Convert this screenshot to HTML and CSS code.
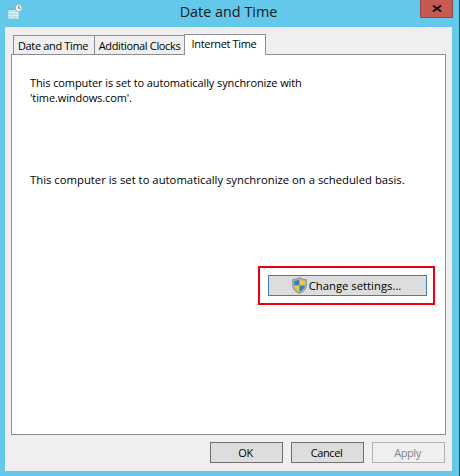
FILE: index.html

```html
<!DOCTYPE html>
<html lang="en">
<head>
    <meta charset="UTF-8">
    <title>Date and Time</title>
    <link rel="stylesheet" href="styles.css">
</head>
<body>
    <div class="window">
        <div class="titlebar">
            <svg class="app-icon" width="15" height="16" viewBox="0 0 15 16">
                <rect x="0" y="4" width="11" height="11" fill="#a8dde8"/>
                <rect x="0" y="4" width="11" height="2" fill="#6fbfd4"/>
                <path d="M0 8.5h11M0 11.5h11M3 6v9M6 6v9M9 6v9" stroke="#d6f1f6" stroke-width="1" fill="none"/>
                <circle cx="10.7" cy="4" r="3.6" fill="#edf1f1" stroke="#a3adb0"/>
                <path d="M10.7 2v2.3h1.8" stroke="#6c7a7e" stroke-width="1" fill="none"/>
            </svg>
            <div class="title">Date and Time</div>
            <div class="close-btn">
                <svg width="10" height="7" viewBox="0 0 10 7">
                    <path d="M1 0.5L9 6.5M9 0.5L1 6.5" stroke="#111" stroke-width="2" fill="none"/>
                </svg>
            </div>
        </div>
        <div class="client">
            <div class="tabs">
                <div class="tab tab-date">Date and Time</div>
                <div class="tab tab-clocks">Additional Clocks</div>
                <div class="tab tab-internet active">Internet Time</div>
            </div>
            <div class="panel">
                <p class="sync-server">This computer is set to automatically synchronize with<br>'time.windows.com'.</p>
                <p class="sync-schedule">This computer is set to automatically synchronize on a scheduled basis.</p>
                <div class="highlight">
                    <button class="btn change-btn">
                        <svg width="15" height="17" viewBox="0 0 15 17">
                            <path d="M7.5 0.5C5.5 2 3 2.5 0.7 2.5V8.5C0.7 12 3.5 15 7.5 16.5C11.5 15 14.3 12 14.3 8.5V2.5C12 2.5 9.5 2 7.5 0.5Z" fill="#a9b0b4" stroke="#7d878c" stroke-width="0.8"/>
                            <path d="M7.5 2.2V8.5H2.2V3.9C4 3.8 6 3.3 7.5 2.2Z" fill="#2f7fd0"/>
                            <path d="M7.5 2.2C9 3.3 11 3.8 12.8 3.9V8.5H7.5Z" fill="#f4c92e"/>
                            <path d="M2.2 8.5H7.5V14.7C4.6 13.5 2.4 11.2 2.2 8.5Z" fill="#f4c92e"/>
                            <path d="M7.5 8.5H12.8C12.6 11.2 10.4 13.5 7.5 14.7Z" fill="#2f7fd0"/>
                        </svg>
                        Change settings...
                    </button>
                </div>
            </div>
            <div class="footer">
                <button class="btn">OK</button>
                <button class="btn">Cancel</button>
                <button class="btn disabled">Apply</button>
            </div>
        </div>
    </div>
</body>
</html>
```

FILE: styles.css

```css
html, body {
    margin: 0;
    padding: 0;
}
body {
    width: 460px;
    height: 476px;
    overflow: hidden;
    font-family: "Open Sans", "Noto Sans", sans-serif;
    font-size: 11px;
    color: #000;
}
.window {
    box-sizing: border-box;
    width: 460px;
    height: 476px;
    background-color: #63c8ea;
    border-right: 1px solid #2f4a57;
    padding: 0 7px 5px 5px;
    display: flex;
    flex-direction: column;
}
.titlebar {
    height: 27px;
    flex: none;
    display: flex;
    position: relative;
    justify-content: center;
}
.app-icon {
    position: absolute;
    left: 3px;
    top: 4px;
}
.title {
    font-size: 14.4px;
    line-height: 23px;
    color: #1a1a1a;
}
.close-btn {
    position: absolute;
    left: 415px;
    top: 0;
    box-sizing: border-box;
    width: 33px;
    height: 18px;
    background-color: #c75a50;
    border: 1px solid #8a4a48;
    border-top: none;
    display: flex;
    align-items: center;
    justify-content: center;
}
.client {
    flex: 1;
    background-color: #efefef;
    padding: 8px 6px 0 6px;
    display: flex;
    flex-direction: column;
}
.tabs {
    display: flex;
    padding-left: 2px;
    height: 19px;
    align-items: flex-end;
}
.tab {
    box-sizing: border-box;
    height: 19px;
    line-height: 19px;
    text-align: center;
    letter-spacing: -0.35px;
    background-color: #efefef;
    border: 1px solid #8e8f94;
    border-bottom: none;
    margin-right: -1px;
    white-space: nowrap;
}
.tab-date {
    width: 82px;
    padding-right: 2px;
}
.tab-clocks {
    width: 91px;
}
.tab-internet {
    width: 82px;
    padding-right: 2px;
}
.tab.active {
    height: 21px;
    line-height: 18px;
    background-color: #fff;
    margin-bottom: -1px;
    position: relative;
    z-index: 1;
}
.panel {
    box-sizing: border-box;
    height: 381px;
    background-color: #fff;
    border: 1px solid #8e8f94;
    display: flex;
    flex-direction: column;
    padding: 20px 10px 0 18px;
}
.panel p {
    margin: 0;
    line-height: 15px;
}
.sync-server {
    letter-spacing: -0.1px;
}
.panel .sync-schedule {
    margin-top: 67px;
    font-size: 11.3px;
}
.highlight {
    align-self: flex-end;
    margin-top: 79px;
    border: 2px solid #e8000f;
    padding: 7px 6px 7px 8px;
}
.btn {
    box-sizing: border-box;
    width: 73px;
    height: 21px;
    padding: 0 2px 0 0;
    background-color: #ddd;
    border: 1px solid #707070;
    font-family: inherit;
    font-size: 11px;
    letter-spacing: -0.4px;
    color: #000;
}
.btn.disabled {
    background-color: #efefef;
    border-color: #adb2b5;
    color: #838383;
}
.change-btn {
    width: 159px;
    border-color: #3c7fb1;
    display: flex;
    align-items: center;
    justify-content: center;
    gap: 2px;
    font-size: 11.3px;
    letter-spacing: 0;
}
.footer {
    display: flex;
    justify-content: flex-end;
    gap: 8px;
    padding: 7px 1px 0 0;
}
```
